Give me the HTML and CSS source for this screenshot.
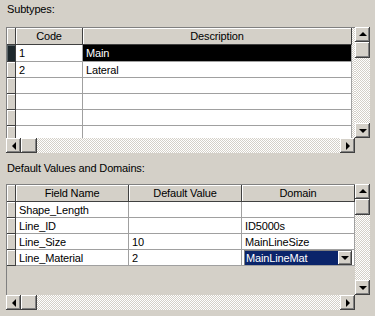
FILE: index.html
```html
<!DOCTYPE html>
<html lang="en">
<head>
    <meta charset="UTF-8">
    <title>Subtypes</title>
    <link rel="stylesheet" href="styles.css">
</head>
<body>
    <div class="caption top">Subtypes:</div>
    <div class="gridbox subtypes">
        <div class="body">
            <div class="row head">
                <div class="sel"></div>
                <div class="cell">Code</div>
                <div class="cell">Description</div>
            </div>
            <div class="row first">
                <div class="sel current"></div>
                <div class="cell">1</div>
                <div class="cell picked">Main</div>
            </div>
            <div class="row">
                <div class="sel"></div>
                <div class="cell">2</div>
                <div class="cell">Lateral</div>
            </div>
            <div class="row"><div class="sel"></div><div class="cell"></div><div class="cell"></div></div>
            <div class="row"><div class="sel"></div><div class="cell"></div><div class="cell"></div></div>
            <div class="row"><div class="sel"></div><div class="cell"></div><div class="cell"></div></div>
            <div class="row"><div class="sel"></div><div class="cell"></div><div class="cell"></div></div>
        </div>
        <div class="vscroll">
            <div class="sbtn up"></div>
            <div class="thumb"></div>
            <div class="track"></div>
            <div class="sbtn down"></div>
        </div>
        <div class="hscroll">
            <div class="sbtn left"></div>
            <div class="thumb"></div>
            <div class="track"></div>
            <div class="sbtn right"></div>
        </div>
        <div class="corner"></div>
    </div>

    <div class="caption second">Default Values and Domains:</div>
    <div class="gridbox domains">
        <div class="body">
            <div class="row head">
                <div class="sel"></div>
                <div class="cell">Field Name</div>
                <div class="cell">Default Value</div>
                <div class="cell">Domain</div>
            </div>
            <div class="row">
                <div class="sel"></div>
                <div class="cell">Shape_Length</div>
                <div class="cell"></div>
                <div class="cell"></div>
            </div>
            <div class="row">
                <div class="sel"></div>
                <div class="cell">Line_ID</div>
                <div class="cell"></div>
                <div class="cell">ID5000s</div>
            </div>
            <div class="row">
                <div class="sel"></div>
                <div class="cell">Line_Size</div>
                <div class="cell">10</div>
                <div class="cell">MainLineSize</div>
            </div>
            <div class="row">
                <div class="sel"></div>
                <div class="cell">Line_Material</div>
                <div class="cell">2</div>
                <div class="cell editing">
                    <div class="combo">
                        <span class="combo-text">MainLineMat</span>
                        <span class="sbtn drop"></span>
                    </div>
                </div>
            </div>
        </div>
        <div class="vscroll">
            <div class="sbtn up"></div>
            <div class="thumb"></div>
            <div class="track"></div>
            <div class="sbtn down"></div>
        </div>
        <div class="hscroll">
            <div class="sbtn left"></div>
            <div class="thumb"></div>
            <div class="track"></div>
            <div class="sbtn right"></div>
        </div>
        <div class="corner"></div>
    </div>
</body>
</html>
```

FILE: styles.css
```css
* {
    box-sizing: border-box;
}
body {
    margin: 0;
    width: 375px;
    height: 316px;
    overflow: hidden;
    background: #d4d0c8;
    font-family: "Liberation Sans", Arial, sans-serif;
    font-size: 11px;
    letter-spacing: -0.15px;
    color: #000;
}
.caption {
    padding-left: 7px;
    line-height: 13px;
    white-space: nowrap;
}
.caption.top {
    height: 27px;
    padding-top: 3px;
}
.caption.second {
    height: 31px;
    padding-top: 9px;
}

/* grid + scrollbars */
.gridbox {
    display: grid;
    margin-left: 6px;
    width: 364px;
    grid-template-columns: 349px 15px;
    grid-template-rows: 111px 15px;
}
.body {
    overflow: hidden;
    border-top: 1px solid #808080;
    border-left: 1px solid #808080;
}
.subtypes .body {
    background-color: #fff;
    background-image: conic-gradient(#fff 25%, #d4d0c8 0 50%, #fff 0 75%, #d4d0c8 0);
    background-size: 2px 2px;
}
.domains .body {
    background: #d4d0c8;
}
.row {
    display: grid;
    height: 16px;
}
.row.head {
    height: 17px;
}
.row.first {
    height: 17px;
}
.subtypes .row {
    grid-template-columns: 9px 67px 269px;
}
.domains .row {
    grid-template-columns: 9px 113px 113px 113px;
}
.cell {
    background: #fff;
    border-right: 1px solid #a0a0a0;
    border-bottom: 1px solid #a0a0a0;
    padding: 1px 0 0 3px;
    line-height: 14px;
    white-space: nowrap;
    overflow: hidden;
}
.head .cell {
    background: #d4d0c8;
    text-align: center;
    padding-left: 0;
    padding-top: 1px;
    border-right-color: #404040;
    border-bottom-color: #404040;
    box-shadow: inset 1px 1px #fff;
}
.sel {
    background: #d4d0c8;
    border-right: 1px solid #404040;
    border-bottom: 1px solid #404040;
    box-shadow: inset 1px 1px #fff;
}
.sel.current {
    background: #1e282c;
    box-shadow: inset 1px 1px #5a6468;
}
.cell.picked {
    background: #000;
    color: #fff;
}
.cell.editing {
    padding: 0 2px 0 2px;
}
.combo {
    display: flex;
    height: 15px;
    background: #0a246a;
    color: #fff;
    border-top: 1px solid #808080;
    border-left: 1px solid #808080;
}
.combo-text {
    flex: 1;
    padding-left: 1px;
    line-height: 14px;
}
.sbtn.drop {
    width: 14px;
    height: 14px;
}

.vscroll {
    display: flex;
    flex-direction: column;
    background-image: conic-gradient(#fff 25%, #d4d0c8 0 50%, #fff 0 75%, #d4d0c8 0);
    background-size: 2px 2px;
}
.hscroll {
    display: flex;
    background-image: conic-gradient(#fff 25%, #d4d0c8 0 50%, #fff 0 75%, #d4d0c8 0);
    background-size: 2px 2px;
}
.track {
    flex: 1;
}
.corner {
    background: #d4d0c8;
}
.sbtn,
.thumb {
    display: flex;
    align-items: center;
    justify-content: center;
    flex: none;
    width: 15px;
    height: 15px;
    background: #d4d0c8;
    box-shadow: inset -1px -1px #404040, inset 1px 1px #fff, inset -2px -2px #808080;
}
.vscroll .thumb {
    height: 16px;
}
.hscroll .thumb {
    width: 16px;
}
.sbtn::after {
    content: "";
    width: 0;
    height: 0;
}
.up::after {
    border-left: 4px solid transparent;
    border-right: 4px solid transparent;
    border-bottom: 4px solid #000;
    margin-top: -1px;
}
.down::after,
.drop::after {
    border-left: 4px solid transparent;
    border-right: 4px solid transparent;
    border-top: 4px solid #000;
}
.left::after {
    border-top: 4px solid transparent;
    border-bottom: 4px solid transparent;
    border-right: 4px solid #000;
}
.right::after {
    border-top: 4px solid transparent;
    border-bottom: 4px solid transparent;
    border-left: 4px solid #000;
}
```
